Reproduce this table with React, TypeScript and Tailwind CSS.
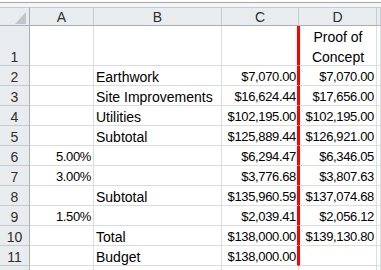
type Row = { n: number; a: string; b: string; c: string; d: string };

const rows: Row[] = [
  { n: 2, a: "", b: "Earthwork", c: "$7,070.00", d: "$7,070.00" },
  { n: 3, a: "", b: "Site Improvements", c: "$16,624.44", d: "$17,656.00" },
  { n: 4, a: "", b: "Utilities", c: "$102,195.00", d: "$102,195.00" },
  { n: 5, a: "", b: "Subtotal", c: "$125,889.44", d: "$126,921.00" },
  { n: 6, a: "5.00%", b: "", c: "$6,294.47", d: "$6,346.05" },
  { n: 7, a: "3.00%", b: "", c: "$3,776.68", d: "$3,807.63" },
  { n: 8, a: "", b: "Subtotal", c: "$135,960.59", d: "$137,074.68" },
  { n: 9, a: "1.50%", b: "", c: "$2,039.41", d: "$2,056.12" },
  { n: 10, a: "", b: "Total", c: "$138,000.00", d: "$139,130.80" },
  { n: 11, a: "", b: "Budget", c: "$138,000.00", d: "" },
];

const grid = "grid grid-cols-[30px_64px_128px_77px_78px_1fr]";
const box = "border-r border-b border-[#dadcdd] bg-white overflow-hidden whitespace-nowrap";
const cell = `flex items-end ${box}`;
const rowHead =
  "flex items-end justify-center border-r border-b border-r-[#a9afb6] border-b-[#c6cbd1] bg-[#e9ecef] text-[#2e2e2e] leading-4";
const num = "text-[13px] tracking-[-0.35px] leading-4";

export default function App() {
  return (
    <div className="h-[270px] w-full overflow-hidden bg-white font-['Liberation_Sans',Arial,sans-serif] text-[14px] text-black">
      {/* formula bar edge */}
      <div className="h-[2px] bg-white" />
      <div className="h-px bg-[#a6a6a6]" />
      <div className="h-[4px] bg-[#f4f5f6]" />

      {/* column headers */}
      <div className={`${grid} h-[19px]`}>
        <div className="relative border-t border-r border-b border-t-[#c6cbd1] border-r-[#a9afb6] border-b-[#a9afb6] bg-[#e9ecef]">
          <svg className="absolute bottom-[1px] right-[3px]" width="11" height="12" viewBox="0 0 11 12">
            <polygon points="11,0 11,12 0,12" fill="#c0c5cb" />
          </svg>
        </div>
        {["A", "B", "C", "D", ""].map((l, i) => (
          <div
            key={i}
            className="flex items-end justify-center border-t border-r border-b border-t-[#c6cbd1] border-r-[#c6cbd1] border-b-[#a9afb6] bg-[#e9ecef] leading-4 text-[#2e2e2e]"
          >
            {l}
          </div>
        ))}
      </div>

      {/* row 1 */}
      <div className={`${grid} h-[40px]`}>
        <div className={rowHead}>1</div>
        <div className={cell} />
        <div className={cell} />
        <div className={`${cell} border-r-2 border-r-[#ff0000]`} />
        <div className={`${box} flex flex-col justify-end items-center text-center border-l border-l-[#ff0000]`}>
          <div className="leading-[23px]">Proof of</div>
          <div className="leading-4">Concept</div>
        </div>
        <div className={cell} />
      </div>

      {rows.map((r) => (
        <div key={r.n} className={`${grid} h-[20px]`}>
          <div className={rowHead}>{r.n}</div>
          <div className={`${cell} justify-end pr-[2px] ${num}`}>{r.a}</div>
          <div className={`${cell} pl-[2px] leading-4`}>{r.b}</div>
          <div className={`${cell} justify-end pr-px border-r-2 border-r-[#ff0000] ${num}`}>{r.c}</div>
          <div className={`${cell} justify-end pr-[2px] border-l border-l-[#ff0000] ${num}`}>{r.d}</div>
          <div className={cell} />
        </div>
      ))}

      {/* row 12 peek */}
      <div className={`${grid} h-[10px]`}>
        <div className={rowHead} />
        <div className={cell} />
        <div className={cell} />
        <div className={cell} />
        <div className={cell} />
        <div className={cell} />
      </div>
    </div>
  );
}
